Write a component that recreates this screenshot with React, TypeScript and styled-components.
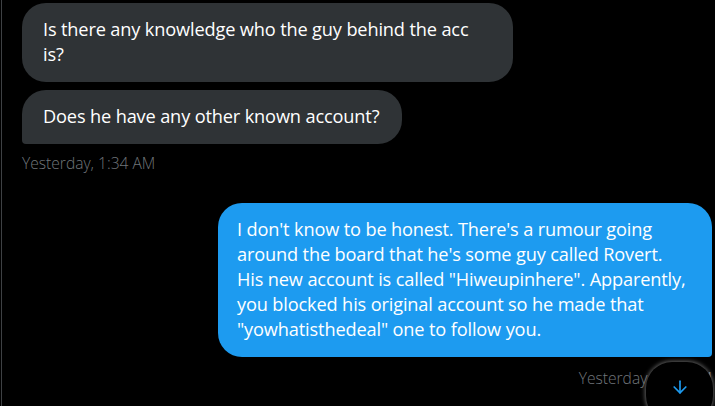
import React from "react";
import styled, { createGlobalStyle } from "styled-components";
import { ArrowDown } from "lucide-react";

const Global = createGlobalStyle`
  html, body { margin: 0; padding: 0; background: #000; }
  body { width: 715px; height: 406px; overflow: hidden; }
  #root { height: 100%; }
`;

const Frame = styled.div`
  position: relative;
  box-sizing: border-box;
  height: 406px;
  margin-left: 1px;
  border-left: 1px solid #3e4144;
  background: #000;
  overflow: hidden;
  font-family: "Open Sans", "Noto Sans", sans-serif;
`;

const Thread = styled.div`
  display: flex;
  flex-direction: column;
  padding: 3px 3px 0 20px;
`;

const Row = styled.div<{ $mine?: boolean; $gap?: number }>`
  display: flex;
  justify-content: ${(p) => (p.$mine ? "flex-end" : "flex-start")};
  margin-top: ${(p) => p.$gap ?? 0}px;
`;

type Corners = { tl?: number; tr?: number; br?: number; bl?: number };

const Bubble = styled.div<{ $mine?: boolean; $c: Corners }>`
  box-sizing: border-box;
  max-width: ${(p) => (p.$mine ? 494 : 491)}px;
  padding: 14px ${(p) => (p.$mine ? 20 : 23)}px 15px ${(p) => (p.$mine ? 19 : 21)}px;
  font-size: 18.2px;
  line-height: 25px;
  letter-spacing: -0.15px;
  color: #fff;
  background: ${(p) => (p.$mine ? "#1d9bf0" : "#2f3336")};
  border-radius: ${(p) => `${p.$c.tl ?? 24}px ${p.$c.tr ?? 24}px ${p.$c.br ?? 24}px ${p.$c.bl ?? 24}px`};
  word-wrap: break-word;
`;

const Stamp = styled.div<{ $mine?: boolean }>`
  font-size: 15.6px;
  line-height: 20px;
  color: #71767b;
  font-weight: 300;
  text-align: ${(p) => (p.$mine ? "right" : "left")};
  white-space: nowrap;
  margin-top: ${(p) => (p.$mine ? 11 : 9)}px;
`;

const ScrollDown = styled.button`
  position: absolute;
  right: 2px;
  bottom: -16px;
  width: 67px;
  height: 60px;
  border-radius: 26px;
  border: none;
  background: #000;
  box-shadow: 0 0 4px 1px rgba(255, 255, 255, 0.38);
  color: #1d9bf0;
  display: flex;
  align-items: flex-start;
  justify-content: center;
  padding-top: 15px;
  box-sizing: border-box;
`;

export default function App() {
  return (
    <>
      <Global />
      <Frame>
        <Thread>
          <Row>
            <Bubble $c={{}}>Is there any knowledge who the guy behind the acc is?</Bubble>
          </Row>
          <Row $gap={8}>
            <Bubble $c={{ bl: 4 }}>Does he have any other known account?</Bubble>
          </Row>
          <Stamp>Yesterday, 1:34 AM</Stamp>
          <Row $mine $gap={30}>
            <Bubble $mine $c={{ br: 4 }}>
              I don't know to be honest. There's a rumour going around the board that he's some guy called Rovert. His
              new account is called "Hiweupinhere". Apparently, you blocked his original account so he made that
              "yowhatisthedeal" one to follow you.
            </Bubble>
          </Row>
          <Stamp $mine>Yesterday, 1:35 AM</Stamp>
        </Thread>
        <ScrollDown aria-label="Scroll to bottom">
          <ArrowDown size={20} strokeWidth={2} />
        </ScrollDown>
      </Frame>
    </>
  );
}
